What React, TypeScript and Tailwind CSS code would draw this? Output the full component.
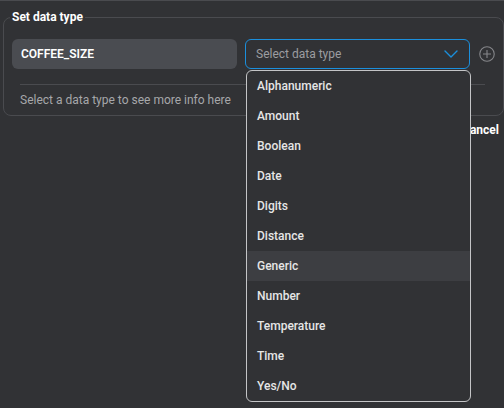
import React from "react";

// --- Data ---

const dataTypes = [
	"Alphanumeric",
	"Amount",
	"Boolean",
	"Date",
	"Digits",
	"Distance",
	"Generic",
	"Number",
	"Temperature",
	"Time",
	"Yes/No",
];

const hovered = "Generic";

// --- Icons ---

const ChevronDown = () => (
	<svg width="14" height="8" viewBox="0 0 14 8" fill="none">
		<path d="M1 1l6 6 6-6" stroke="#1b8fdc" strokeWidth="1.4" strokeLinecap="round" strokeLinejoin="round" />
	</svg>
);

const PlusCircle = () => (
	<svg width="16" height="16" viewBox="0 0 16 16" fill="none">
		<circle cx="8" cy="8" r="7.25" stroke="#85868a" strokeWidth="1.1" />
		<path d="M8 4v8M4 8h8" stroke="#85868a" strokeWidth="1.1" />
	</svg>
);

// --- Sub-Components ---

const DataTypeMenu = () => (
	<div className="absolute top-[69px] left-[246px] w-[225px] overflow-hidden rounded-md border border-[#c4c5c7] bg-[#313235]">
		{dataTypes.map((t) => (
			<div
				key={t}
				className={`flex h-[30px] items-center pl-[10px] text-xs font-medium text-[#e6e6e6] ${
					t === hovered ? "bg-[#3d3e42]" : ""
				}`}
			>
				{t}
			</div>
		))}
	</div>
);

export default function App() {
	return (
		<div className="relative h-[408px] w-[504px] overflow-hidden border-t border-[#4a4b4f] bg-[#313235] font-['Roboto',sans-serif]">
			<fieldset className="mt-2 ml-[3px] w-[500px] rounded-lg border border-[#4a4b4f] px-2 pb-[7px]">
				<legend className="-ml-[2px] px-[2px] text-xs leading-4 font-bold text-white">Set data type</legend>

				{/* Name + type row */}
				<div className="flex items-center gap-2 pt-[14px]">
					<div className="flex h-[30px] w-[225px] items-center rounded-md bg-[#4a4c51] pl-[9px] text-xs font-semibold text-white">
						COFFEE_SIZE
					</div>
					<div className="flex h-[30px] w-[225px] items-center justify-between rounded-md border border-[#1b8fdc] pr-[11px] pl-[10px] text-xs text-[#9c9da0]">
						<span>Select data type</span>
						<ChevronDown />
					</div>
					<div className="ml-px flex">
						<PlusCircle />
					</div>
				</div>

				<div className="mt-[15px] ml-2 h-px w-[465px] bg-[#4a4b4f]" />

				<p className="mt-[7px] ml-2 text-xs leading-4 text-[#a6a7aa]">Select a data type to see more info here</p>
			</fieldset>

			{/* Footer */}
			<div className="mt-[6px] flex justify-end pr-[5px]">
				<button className="text-xs leading-4 font-bold text-white">Cancel</button>
			</div>

			<DataTypeMenu />
		</div>
	);
}
